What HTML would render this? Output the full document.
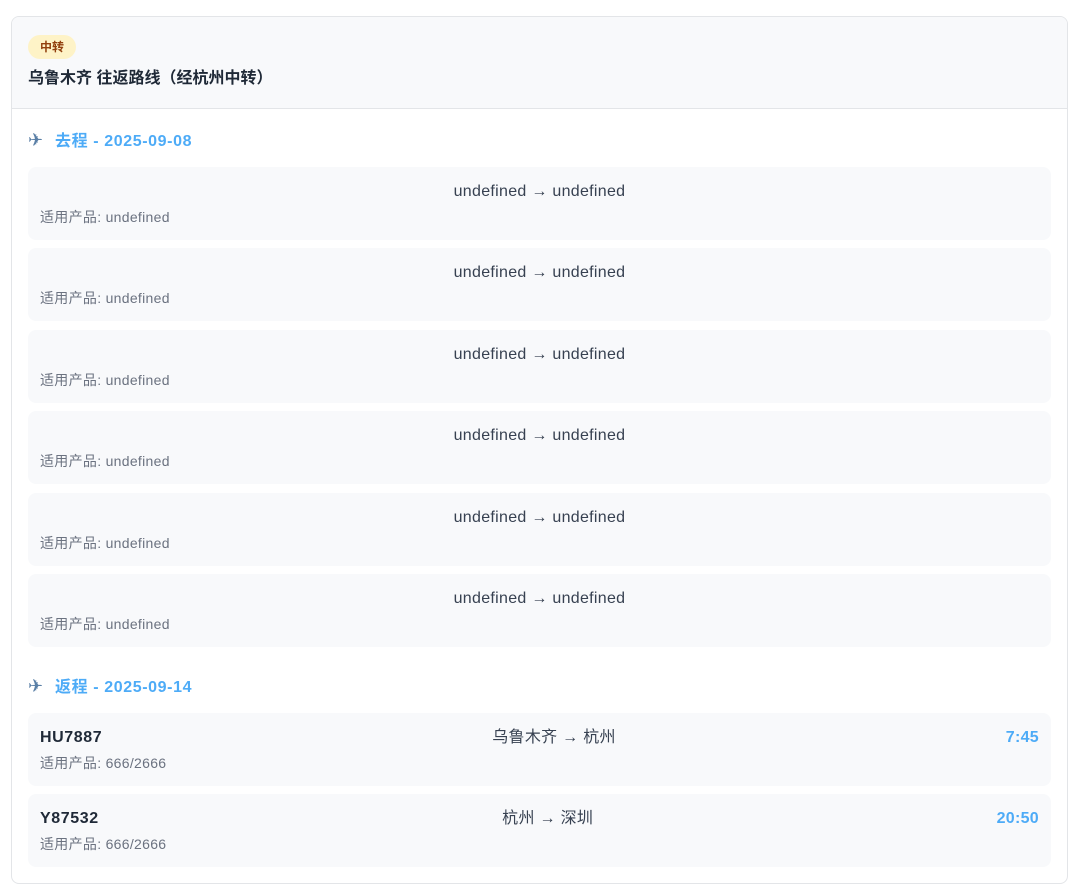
<!DOCTYPE html>
<html><head><meta charset="utf-8"><style>
*{box-sizing:border-box;margin:0;padding:0}
body{width:1080px;height:896px;background:#fff;font-family:"Liberation Sans","Noto Sans CJK SC",sans-serif;color:#1f2937}
.card{position:absolute;left:11px;top:16px;width:1057px;height:868px;border:1px solid #e3e5e8;border-radius:8px;overflow:hidden}
.hd{background:#f8f9fb;height:92px;border-bottom:1px solid #e3e5e8;padding:18px 16px 0}
.badge{display:inline-block;height:24px;line-height:24px;padding:0 12px;background:#fef3c7;color:#92400e;border-radius:12px;font-size:12px;font-weight:bold}
.title{margin-top:8px;font-size:16px;font-weight:bold;line-height:24px;color:#1f2937}
.sec{position:absolute;left:16px;font-size:16px;font-weight:bold;color:#4dabf7;line-height:24px;letter-spacing:0.6px}
.sec .pl{display:inline-block;width:22px;color:#5a7fa6;font-family:"DejaVu Sans",sans-serif;font-weight:normal;font-size:18px}
.row{position:absolute;left:16px;width:1023px;height:73px;background:#f8f9fb;border-radius:8px;padding:13px 12px 0}
.top{display:flex;justify-content:space-between;line-height:24px;height:24px;font-size:16px;letter-spacing:0.3px}
.fn{font-weight:bold;color:#1f2937;letter-spacing:0.6px}
.rt{color:#374151}
.tm{font-weight:bold;color:#4dabf7}
.pr{margin-top:2px;font-size:14px;line-height:22px;color:#6b7280;letter-spacing:0.3px}
</style></head><body>
<div class="card">
<div class="hd"><span class="badge">中转</span><div class="title">乌鲁木齐 往返路线（经杭州中转）</div></div>
<div class="sec" style="top:112px"><span class="pl">✈</span> 去程 - 2025-09-08</div>
<div class="row" style="top:150px"><div class="top"><span></span><span class="rt">undefined → undefined</span><span></span></div><div class="pr">适用产品: undefined</div></div>
<div class="row" style="top:231px"><div class="top"><span></span><span class="rt">undefined → undefined</span><span></span></div><div class="pr">适用产品: undefined</div></div>
<div class="row" style="top:313px"><div class="top"><span></span><span class="rt">undefined → undefined</span><span></span></div><div class="pr">适用产品: undefined</div></div>
<div class="row" style="top:394px"><div class="top"><span></span><span class="rt">undefined → undefined</span><span></span></div><div class="pr">适用产品: undefined</div></div>
<div class="row" style="top:476px"><div class="top"><span></span><span class="rt">undefined → undefined</span><span></span></div><div class="pr">适用产品: undefined</div></div>
<div class="row" style="top:557px"><div class="top"><span></span><span class="rt">undefined → undefined</span><span></span></div><div class="pr">适用产品: undefined</div></div>
<div class="sec" style="top:658px"><span class="pl">✈</span> 返程 - 2025-09-14</div>
<div class="row" style="top:696px"><div class="top"><span class="fn">HU7887</span><span class="rt">乌鲁木齐 → 杭州</span><span class="tm">7:45</span></div><div class="pr">适用产品: 666/2666</div></div>
<div class="row" style="top:777px"><div class="top"><span class="fn">Y87532</span><span class="rt">杭州 → 深圳</span><span class="tm">20:50</span></div><div class="pr">适用产品: 666/2666</div></div>
</div>
</body></html>
